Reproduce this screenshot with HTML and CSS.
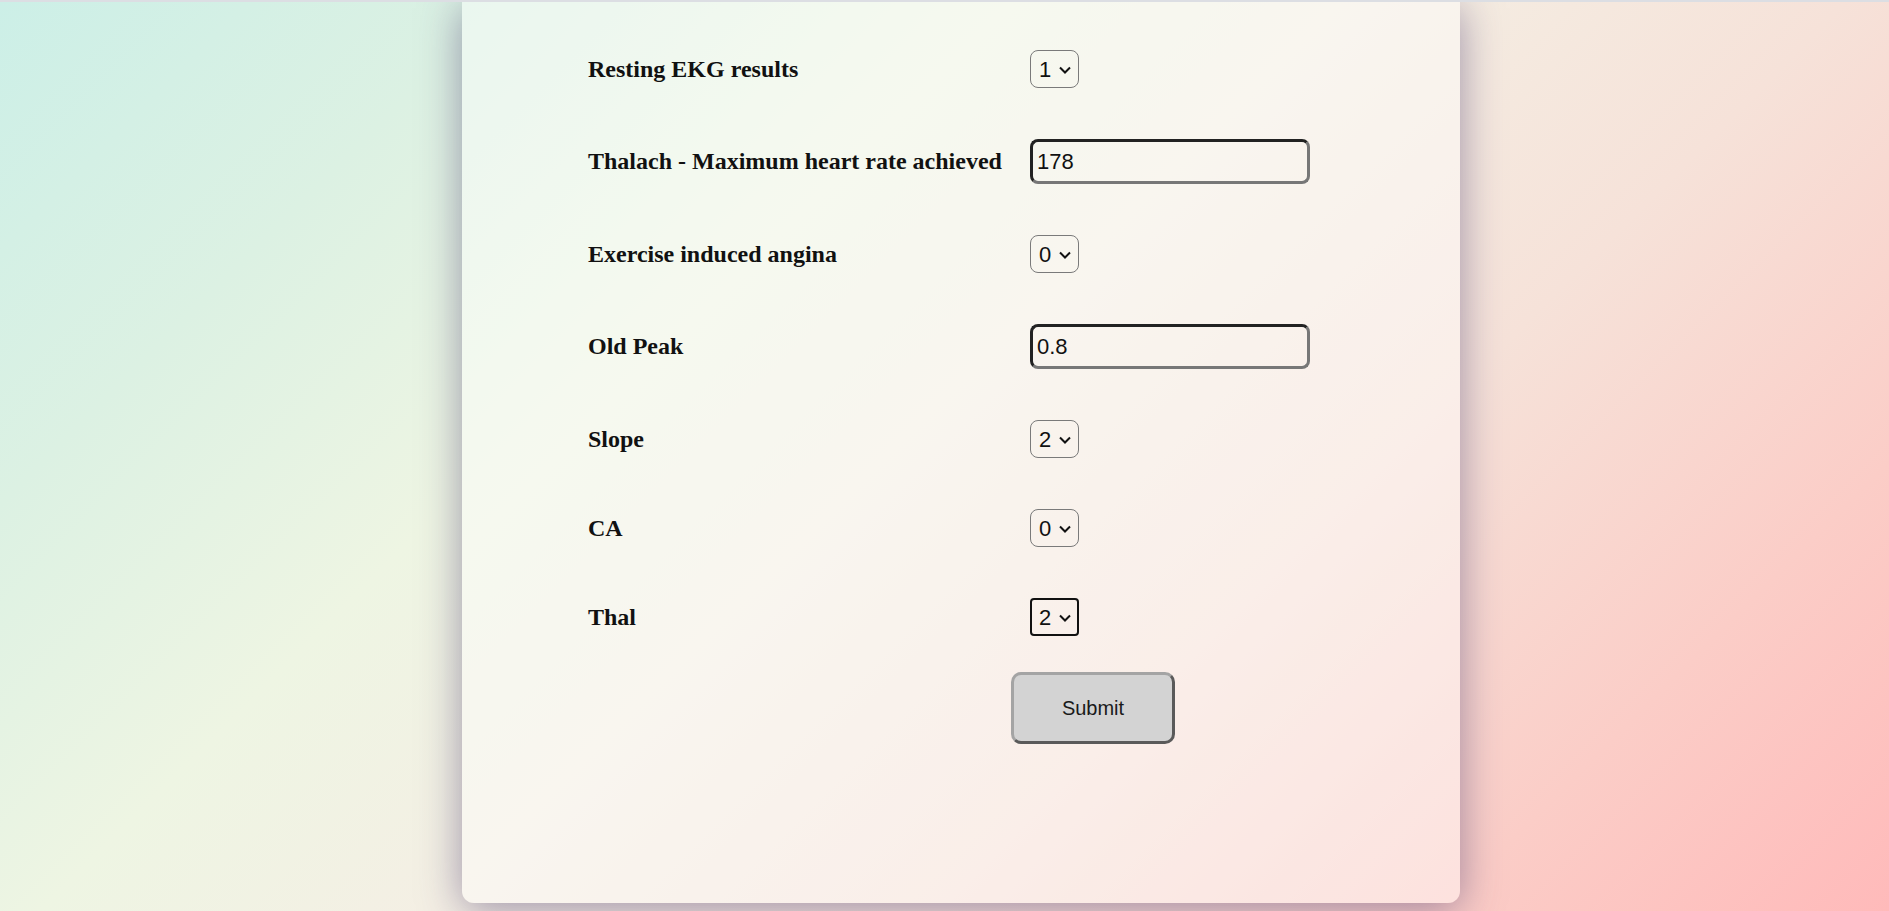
FILE: index.html
```html
<!DOCTYPE html>
<html lang="en">
<head>
<meta charset="utf-8">
<title>Heart Disease Prediction</title>
<link rel="stylesheet" href="styles.css">
</head>
<body>
<div class="topbar"></div>
<main class="card">
  <form class="form" onsubmit="return false;">
    <div class="row">
      <label class="label" for="restecg">Resting EKG results</label>
      <span class="select-wrap">
        <select id="restecg" class="select"><option>0</option><option selected>1</option><option>2</option></select>
        <svg class="chev" width="12" height="8" viewBox="0 0 12 8"><path d="M1 1.5 L6 6.5 L11 1.5" fill="none" stroke="#111" stroke-width="2"/></svg>
      </span>
    </div>
    <div class="row">
      <label class="label" for="thalach">Thalach - Maximum heart rate achieved</label>
      <input id="thalach" class="text-input" type="text" value="178">
    </div>
    <div class="row">
      <label class="label" for="exang">Exercise induced angina</label>
      <span class="select-wrap">
        <select id="exang" class="select"><option selected>0</option><option>1</option></select>
        <svg class="chev" width="12" height="8" viewBox="0 0 12 8"><path d="M1 1.5 L6 6.5 L11 1.5" fill="none" stroke="#111" stroke-width="2"/></svg>
      </span>
    </div>
    <div class="row">
      <label class="label" for="oldpeak">Old Peak</label>
      <input id="oldpeak" class="text-input" type="text" value="0.8">
    </div>
    <div class="row">
      <label class="label" for="slope">Slope</label>
      <span class="select-wrap">
        <select id="slope" class="select"><option>0</option><option>1</option><option selected>2</option></select>
        <svg class="chev" width="12" height="8" viewBox="0 0 12 8"><path d="M1 1.5 L6 6.5 L11 1.5" fill="none" stroke="#111" stroke-width="2"/></svg>
      </span>
    </div>
    <div class="row">
      <label class="label" for="ca">CA</label>
      <span class="select-wrap">
        <select id="ca" class="select"><option selected>0</option><option>1</option><option>2</option><option>3</option></select>
        <svg class="chev" width="12" height="8" viewBox="0 0 12 8"><path d="M1 1.5 L6 6.5 L11 1.5" fill="none" stroke="#111" stroke-width="2"/></svg>
      </span>
    </div>
    <div class="row">
      <label class="label" for="thal">Thal</label>
      <span class="select-wrap">
        <select id="thal" class="select select-focused"><option>1</option><option selected>2</option><option>3</option></select>
        <svg class="chev" width="12" height="8" viewBox="0 0 12 8"><path d="M1 1.5 L6 6.5 L11 1.5" fill="none" stroke="#111" stroke-width="2"/></svg>
      </span>
    </div>
    <div class="submit-row">
      <button class="submit" type="submit">Submit</button>
    </div>
  </form>
</main>
</body>
</html>
```

FILE: styles.css
```css
html, body {
  margin: 0;
  padding: 0;
}

body {
  height: 911px;
  overflow: hidden;
  background: linear-gradient(135deg, #ccefe7 0%, #dcf1e3 18%, #eef5e3 34%, #f4efe4 48%, #f6e2d9 66%, #fbcdc7 84%, #ffbaba 100%);
  font-family: "Liberation Serif", "Times New Roman", serif;
  color: #111;
}

.topbar {
  height: 2px;
  background: #dcdee3;
  position: relative;
  z-index: 2;
}

.card {
  margin-left: 462px;
  width: 998px;
  box-sizing: border-box;
  padding: 48px 0 159px 126px;
  background: rgba(255, 255, 255, 0.42);
  border-radius: 0 0 12px 12px;
  box-shadow: 0 6px 42px rgba(70, 55, 110, 0.5);
}

.form {
  display: flex;
  flex-direction: column;
  gap: 51px;
}

.row {
  display: grid;
  grid-template-columns: 442px auto;
  align-items: center;
}

.label {
  font-family: "Liberation Serif", "Times New Roman", serif;
  font-weight: bold;
  font-size: 24px;
  line-height: 27px;
  color: #111;
}

.select-wrap {
  position: relative;
  display: inline-flex;
  width: 49px;
  height: 38px;
}

.select {
  appearance: none;
  -webkit-appearance: none;
  width: 49px;
  height: 38px;
  box-sizing: border-box;
  margin: 0;
  padding: 0 0 0 8px;
  border: 1px solid #7a7a7a;
  border-radius: 8px;
  background: transparent;
  font-family: "Liberation Sans", Arial, sans-serif;
  font-size: 22px;
  color: #111;
  outline: none;
}

.select-focused {
  border: 2px solid #111;
  border-radius: 4px;
  padding-left: 7px;
}

.chev {
  position: absolute;
  right: 8px;
  top: 16px;
  pointer-events: none;
}

.text-input {
  width: 280px;
  height: 45px;
  box-sizing: border-box;
  margin: 0;
  padding: 0 4px;
  border-style: solid;
  border-width: 3px;
  border-color: #222 #777 #777 #222;
  border-radius: 8px;
  background: transparent;
  font-family: "Liberation Sans", Arial, sans-serif;
  font-size: 22px;
  color: #111;
  outline: none;
}

.submit-row {
  margin-top: -15px;
  padding-left: 423px;
}

.submit {
  width: 164px;
  height: 72px;
  box-sizing: border-box;
  border-style: solid;
  border-width: 3px;
  border-color: #a4a4a4 #5a5a5a #5a5a5a #a4a4a4;
  border-radius: 10px;
  background: #d3d3d3;
  font-family: "Liberation Sans", Arial, sans-serif;
  font-size: 20px;
  color: #1a1a1a;
  padding: 0;
}
```
